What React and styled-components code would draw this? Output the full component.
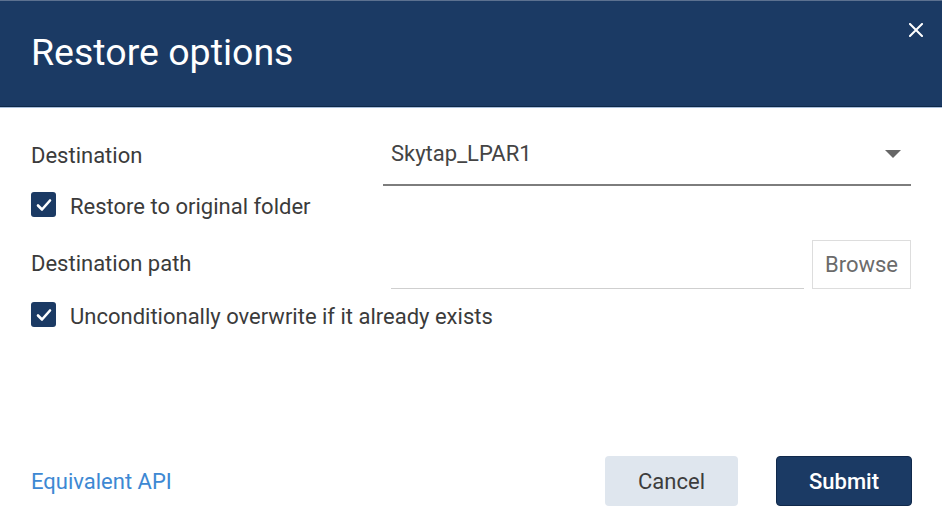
import * as React from "react"
import styled, { createGlobalStyle } from "styled-components"

const GlobalStyle = createGlobalStyle`
    html, body {
        margin: 0;
        padding: 0;
        background: #ffffff;
    }
    body {
        font-family: Roboto, "Liberation Sans", Arial, sans-serif;
    }
`

const CheckIcon = () => (
    <svg width="16" height="14" viewBox="0 0 16 14">
        <path d="M2 7.5 L6 11.5 L14 2.5" fill="none" stroke="#ffffff" strokeWidth="2.6" strokeLinecap="round" strokeLinejoin="round" />
    </svg>
)

const CloseIcon = () => (
    <svg width="14" height="14" viewBox="0 0 14 14">
        <path d="M1 1 L13 13 M13 1 L1 13" stroke="#ffffff" strokeWidth="2" strokeLinecap="square" />
    </svg>
)

const CheckRow = ({ label }) => (
    <CheckRowContainer>
        <CheckBox><CheckIcon /></CheckBox>
        <CheckLabel>{label}</CheckLabel>
    </CheckRowContainer>
)

const App = () => {
    return (
        <Dialog>
            <GlobalStyle />
            <Header>
                <Title>Restore options</Title>
                <CloseButton aria-label="Close"><CloseIcon /></CloseButton>
            </Header>
            <Body>
                <FieldRow>
                    <FieldLabel>Destination</FieldLabel>
                    <Select>
                        <SelectValue>Skytap_LPAR1</SelectValue>
                        <Caret />
                    </Select>
                </FieldRow>
                <CheckRow label="Restore to original folder" />
                <PathRow>
                    <FieldLabel>Destination path</FieldLabel>
                    <PathField>
                        <PathInput />
                        <BrowseButton>Browse</BrowseButton>
                    </PathField>
                </PathRow>
                <CheckRow label="Unconditionally overwrite if it already exists" />
            </Body>
            <Footer>
                <ApiLink>Equivalent API</ApiLink>
                <Actions>
                    <ActionButton>Cancel</ActionButton>
                    <ActionButton primary>Submit</ActionButton>
                </Actions>
            </Footer>
        </Dialog>
    )
}

const Dialog = styled.div`
    display: flex;
    flex-direction: column;
    height: 100vh;
    background: #ffffff;
`

const Header = styled.div`
    display: flex;
    justify-content: space-between;
    align-items: flex-start;
    height: 105px;
    padding: 0 19px 0 31px;
    background: #1b3a64;
    border-top: 1px solid #5c7190;
    border-bottom: 1px solid #0e2848;
    box-shadow: 0 1px 0 #a9bfdc;
`

const Title = styled.h1`
    margin: 31px 0 0;
    font-size: 37.5px;
    font-weight: 400;
    line-height: 40px;
    color: #ffffff;
`

const CloseButton = styled.button`
    display: flex;
    margin-top: 22px;
    padding: 0;
    border: none;
    background: none;
    cursor: pointer;
`

const Body = styled.div`
    display: flex;
    flex-direction: column;
    padding: 20px 31px 0;
    flex: 1;
`

const FieldRow = styled.div`
    display: grid;
    grid-template-columns: 352px 1fr;
    align-items: center;
`

const FieldLabel = styled.div`
    font-size: 22px;
    color: #3b3b3b;
    margin-top: -3px;
`

const Select = styled.div`
    display: flex;
    align-items: center;
    justify-content: space-between;
    height: 57px;
    padding: 0 10px 0 8px;
    border-bottom: 2px solid #7d7d7d;
`

const SelectValue = styled.span`
    font-size: 22px;
    color: #444444;
    margin-top: -5px;
`

const Caret = styled.span`
    width: 0;
    height: 0;
    margin-top: -4px;
    border-left: 8px solid transparent;
    border-right: 8px solid transparent;
    border-top: 8px solid #666666;
`

const CheckRowContainer = styled.div`
    display: flex;
    align-items: center;
    gap: 14px;
    margin-top: 6px;
    height: 25px;
`

const CheckBox = styled.span`
    display: flex;
    align-items: center;
    justify-content: center;
    width: 25px;
    height: 25px;
    box-sizing: border-box;
    border-radius: 3px;
    background: #1b3a64;
`

const CheckLabel = styled.span`
    font-size: 22px;
    color: #3b3b3b;
    padding-top: 4px;
`

const PathRow = styled(FieldRow)`
    margin-top: 23px;
    margin-bottom: 7px;
`

const PathField = styled.div`
    display: flex;
    align-items: stretch;
    gap: 8px;
    padding-left: 8px;
    height: 49px;
`

const PathInput = styled.div`
    flex: 1;
    border-bottom: 1px solid #cfcfcf;
`

const BrowseButton = styled.button`
    width: 99px;
    padding: 0;
    border: 1px solid #dddddd;
    background: #ffffff;
    font-family: inherit;
    font-size: 22px;
    color: #6b6b6b;
`

const Footer = styled.div`
    display: flex;
    align-items: center;
    justify-content: space-between;
    padding: 0 30px 25px 31px;
`

const ApiLink = styled.a`
    font-size: 22px;
    color: #3d88d3;
    cursor: pointer;
`

const Actions = styled.div`
    display: flex;
    gap: 38px;
`

const ActionButton = styled.button`
    height: 50px;
    width: ${props => props.primary ? "136px" : "133px"};
    border: ${props => props.primary ? "1px solid #10294b" : "none"};
    border-radius: 4px;
    background: ${props => props.primary ? "#1b3a64" : "#dfe6ee"};
    color: ${props => props.primary ? "#ffffff" : "#3d3d3d"};
    font-family: inherit;
    font-size: 22px;
    font-weight: ${props => props.primary ? 500 : 400};
    cursor: pointer;
`

export default App
